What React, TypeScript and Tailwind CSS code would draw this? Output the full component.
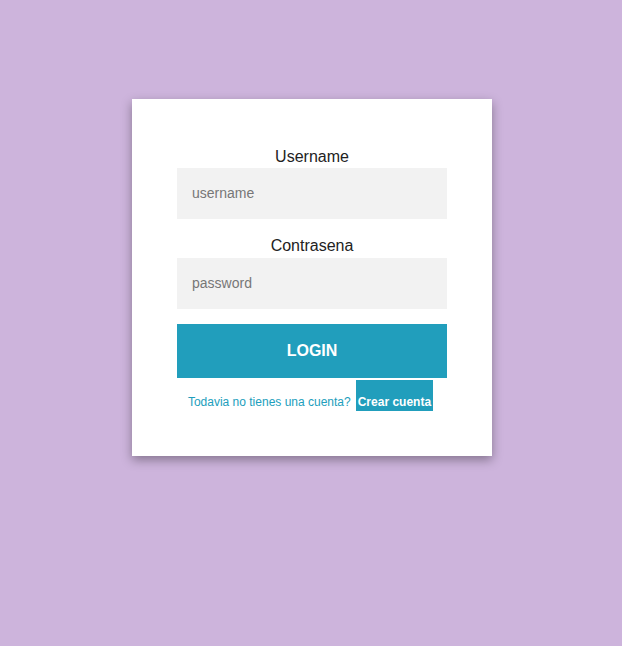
import React from "react";

export default function App() {
  return (
    <div className="min-h-[646px] w-full bg-[#cdb4dc] pt-[99px] pl-[2px] flex justify-center" style={{ fontFamily: '"Liberation Sans", Arial, sans-serif' }}>
      <div className="w-[360px] h-[357px] bg-white px-[45px] pt-[45px] shadow-[0_4px_10px_rgba(0,0,0,0.35)] flex flex-col self-start">
        <label className="block text-center text-[16px] leading-[26px] h-[24px] text-[#222]">Username</label>
        <input
          className="block w-full h-[51px] bg-[#f2f2f2] px-[15px] pb-[2px] text-[14px] text-[#333] placeholder:text-[#777] outline-none"
          placeholder="username"
        />
        <label className="block text-center text-[16px] leading-[26px] text-[#222] mt-[14px] h-[25px]">Contrasena</label>
        <input
          type="password"
          className="block w-full h-[51px] bg-[#f2f2f2] px-[15px] pb-[2px] text-[14px] text-[#333] placeholder:text-[#777] outline-none"
          placeholder="password"
        />
        <button className="mt-[15px] h-[54px] w-full bg-[#219ebc] text-white font-bold text-[16px] uppercase">
          LOGIN
        </button>
        <div className="flex justify-center items-end mt-[2px] pr-[3px] text-[12px]">
          <span className="text-[#219ebc] leading-[14px] pb-[2px]">Todavia no tienes una cuenta?</span>
          <span className="ml-[5px] bg-[#219ebc] text-white font-bold px-[2px] pt-[15px] pb-[2px] leading-[14px]">Crear cuenta</span>
        </div>
      </div>
    </div>
  );
}
